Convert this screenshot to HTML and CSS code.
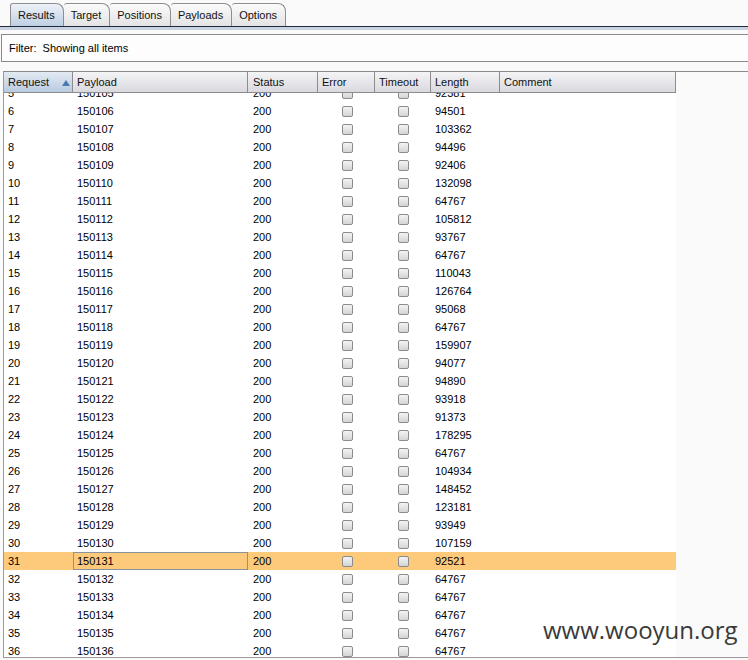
FILE: index.html
```html
<!DOCTYPE html>
<html>
<head>
<meta charset="utf-8">
<link rel="stylesheet" href="styles.css">
</head>
<body>
<div class="tabbar">
  <div class="tab active">Results</div>
  <div class="tab">Target</div>
  <div class="tab">Positions</div>
  <div class="tab">Payloads</div>
  <div class="tab">Options</div>
</div>
<div class="filter">Filter:&nbsp; Showing all items</div>
<div class="pane">
  <div class="table">
    <div class="row head">
      <div class="hc sorted">Request<span class="arrow"></span></div>
      <div class="hc">Payload</div>
      <div class="hc">Status</div>
      <div class="hc">Error</div>
      <div class="hc">Timeout</div>
      <div class="hc">Length</div>
      <div class="hc">Comment</div>
    </div>
    <div class="body">
      <div class="rows">
        <div class="row"><div>5</div><div>150105</div><div>200</div><div class="cb"><i></i></div><div class="cb"><i></i></div><div>92381</div><div></div></div>
        <div class="row"><div>6</div><div>150106</div><div>200</div><div class="cb"><i></i></div><div class="cb"><i></i></div><div>94501</div><div></div></div>
        <div class="row"><div>7</div><div>150107</div><div>200</div><div class="cb"><i></i></div><div class="cb"><i></i></div><div>103362</div><div></div></div>
        <div class="row"><div>8</div><div>150108</div><div>200</div><div class="cb"><i></i></div><div class="cb"><i></i></div><div>94496</div><div></div></div>
        <div class="row"><div>9</div><div>150109</div><div>200</div><div class="cb"><i></i></div><div class="cb"><i></i></div><div>92406</div><div></div></div>
        <div class="row"><div>10</div><div>150110</div><div>200</div><div class="cb"><i></i></div><div class="cb"><i></i></div><div>132098</div><div></div></div>
        <div class="row"><div>11</div><div>150111</div><div>200</div><div class="cb"><i></i></div><div class="cb"><i></i></div><div>64767</div><div></div></div>
        <div class="row"><div>12</div><div>150112</div><div>200</div><div class="cb"><i></i></div><div class="cb"><i></i></div><div>105812</div><div></div></div>
        <div class="row"><div>13</div><div>150113</div><div>200</div><div class="cb"><i></i></div><div class="cb"><i></i></div><div>93767</div><div></div></div>
        <div class="row"><div>14</div><div>150114</div><div>200</div><div class="cb"><i></i></div><div class="cb"><i></i></div><div>64767</div><div></div></div>
        <div class="row"><div>15</div><div>150115</div><div>200</div><div class="cb"><i></i></div><div class="cb"><i></i></div><div>110043</div><div></div></div>
        <div class="row"><div>16</div><div>150116</div><div>200</div><div class="cb"><i></i></div><div class="cb"><i></i></div><div>126764</div><div></div></div>
        <div class="row"><div>17</div><div>150117</div><div>200</div><div class="cb"><i></i></div><div class="cb"><i></i></div><div>95068</div><div></div></div>
        <div class="row"><div>18</div><div>150118</div><div>200</div><div class="cb"><i></i></div><div class="cb"><i></i></div><div>64767</div><div></div></div>
        <div class="row"><div>19</div><div>150119</div><div>200</div><div class="cb"><i></i></div><div class="cb"><i></i></div><div>159907</div><div></div></div>
        <div class="row"><div>20</div><div>150120</div><div>200</div><div class="cb"><i></i></div><div class="cb"><i></i></div><div>94077</div><div></div></div>
        <div class="row"><div>21</div><div>150121</div><div>200</div><div class="cb"><i></i></div><div class="cb"><i></i></div><div>94890</div><div></div></div>
        <div class="row"><div>22</div><div>150122</div><div>200</div><div class="cb"><i></i></div><div class="cb"><i></i></div><div>93918</div><div></div></div>
        <div class="row"><div>23</div><div>150123</div><div>200</div><div class="cb"><i></i></div><div class="cb"><i></i></div><div>91373</div><div></div></div>
        <div class="row"><div>24</div><div>150124</div><div>200</div><div class="cb"><i></i></div><div class="cb"><i></i></div><div>178295</div><div></div></div>
        <div class="row"><div>25</div><div>150125</div><div>200</div><div class="cb"><i></i></div><div class="cb"><i></i></div><div>64767</div><div></div></div>
        <div class="row"><div>26</div><div>150126</div><div>200</div><div class="cb"><i></i></div><div class="cb"><i></i></div><div>104934</div><div></div></div>
        <div class="row"><div>27</div><div>150127</div><div>200</div><div class="cb"><i></i></div><div class="cb"><i></i></div><div>148452</div><div></div></div>
        <div class="row"><div>28</div><div>150128</div><div>200</div><div class="cb"><i></i></div><div class="cb"><i></i></div><div>123181</div><div></div></div>
        <div class="row"><div>29</div><div>150129</div><div>200</div><div class="cb"><i></i></div><div class="cb"><i></i></div><div>93949</div><div></div></div>
        <div class="row"><div>30</div><div>150130</div><div>200</div><div class="cb"><i></i></div><div class="cb"><i></i></div><div>107159</div><div></div></div>
        <div class="row sel"><div>31</div><div class="focus">150131</div><div>200</div><div class="cb"><i></i></div><div class="cb"><i></i></div><div>92521</div><div></div></div>
        <div class="row"><div>32</div><div>150132</div><div>200</div><div class="cb"><i></i></div><div class="cb"><i></i></div><div>64767</div><div></div></div>
        <div class="row"><div>33</div><div>150133</div><div>200</div><div class="cb"><i></i></div><div class="cb"><i></i></div><div>64767</div><div></div></div>
        <div class="row"><div>34</div><div>150134</div><div>200</div><div class="cb"><i></i></div><div class="cb"><i></i></div><div>64767</div><div></div></div>
        <div class="row"><div>35</div><div>150135</div><div>200</div><div class="cb"><i></i></div><div class="cb"><i></i></div><div>64767</div><div></div></div>
        <div class="row"><div>36</div><div>150136</div><div>200</div><div class="cb"><i></i></div><div class="cb"><i></i></div><div>64767</div><div></div></div>
      </div>
    </div>
  </div>
</div>
<div class="watermark">www.wooyun.org</div>
</body>
</html>
```

FILE: styles.css
```css
* { box-sizing: border-box; }
html, body { margin: 0; padding: 0; }
body {
  width: 748px;
  height: 660px;
  overflow: hidden;
  background: #fafafa;
  font-family: "Liberation Sans", Arial, sans-serif;
  font-size: 11px;
  color: #000;
  position: relative;
}
.tabbar {
  display: flex;
  padding: 3px 0 0 10px;
  height: 30px;
  border-bottom: 3px solid #c9d2df;
  position: relative;
}
.tabbar::after {
  content: "";
  position: absolute;
  left: 0; right: 0; bottom: 0;
  height: 1px;
  background: #1f2942;
}
.tab {
  height: 24px;
  padding: 0 8px 0 7px;
  line-height: 22px;
  border: 1px solid #8e8e8e;
  border-left: none;
  border-bottom: none;
  border-radius: 3px 8px 0 0;
  background: linear-gradient(#fbfbfb, #e2e2e2);
  color: #111;
}
.tab:first-child { border-left: 1px solid #8e8e8e; }
.tab.active {
  background: linear-gradient(#eef2f8, #bccde2);
}
.filter {
  margin-top: 4px;
  height: 28px;
  border: 1px solid #8a8a8a;
  border-right: none;
  margin-left: 1px;
  background: #fdfdfd;
  padding-left: 7px;
  line-height: 26px;
}
.pane {
  margin-top: 9px;
  margin-left: 3px;
  height: 587px;
  border-top: 1px solid #8a8a8a;
  border-left: 1px solid #9a9a9a;
  border-bottom: 1px solid #9a9a9a;
  overflow: hidden;
}
.table {
  width: 672px;
  height: 100%;
  display: flex;
  flex-direction: column;
  background: #fff;
}
.row {
  display: grid;
  grid-template-columns: 69px 175px 70px 57px 56px 69px 176px;
  height: 18px;
  line-height: 18px;
}
.row > div { padding-left: 4px; white-space: nowrap; }
.row > div:nth-child(3) { padding-left: 5px; }
.row.head {
  height: 21px;
  line-height: 20px;
  flex: none;
  border-bottom: 1px solid #8c8c8c;
}
.hc {
  background: linear-gradient(#f4f4f6, #d9d9df);
  border-right: 1px solid #8c8c8c;
  position: relative;
  color: #111;
}
.hc.sorted { background: linear-gradient(#e3eaf3, #b9cbe0); }
.arrow {
  position: absolute;
  left: 58px;
  top: 8px;
  width: 0; height: 0;
  border-left: 4px solid transparent;
  border-right: 4px solid transparent;
  border-bottom: 6px solid #4b79b3;
}
.body { flex: 1; overflow: hidden; }
.rows { margin-top: -9px; }
.row .cb {
  padding-left: 0;
  display: flex;
  align-items: center;
  justify-content: center;
}
.cb i {
  display: block;
  width: 11px;
  height: 11px;
  border: 1px solid #8b8b8b;
  border-radius: 2px;
  background: linear-gradient(#f4f4f4, #d4d4d4);
  margin-left: 1px;
}
.row.sel { background: #fdc97b; }
.row.sel .focus {
  border: 1px solid #8a929b;
  line-height: 16px;
  padding-left: 3px;
}
.watermark {
  position: absolute;
  left: 543px;
  top: 613px;
  font-family: "Open Sans", sans-serif;
  font-size: 24px;
  color: #3a3a3a;
}
```
